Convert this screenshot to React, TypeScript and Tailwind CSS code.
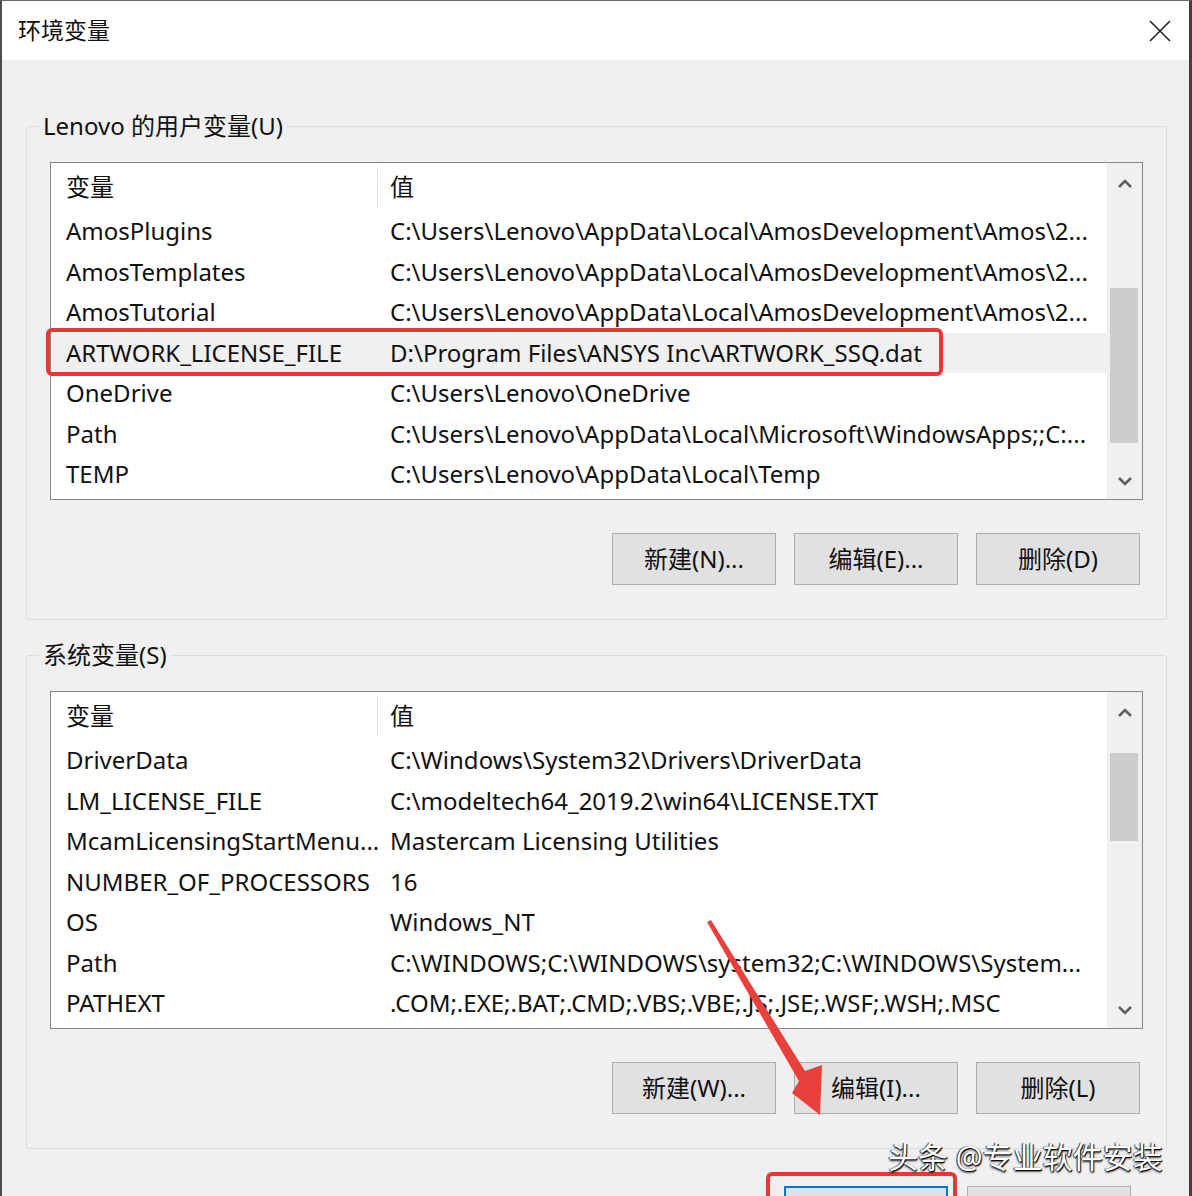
import React from "react";

type Row = { name: string; value: string; selected?: boolean };

const userRows: Row[] = [
  { name: "AmosPlugins", value: "C:\\Users\\Lenovo\\AppData\\Local\\AmosDevelopment\\Amos\\2..." },
  { name: "AmosTemplates", value: "C:\\Users\\Lenovo\\AppData\\Local\\AmosDevelopment\\Amos\\2..." },
  { name: "AmosTutorial", value: "C:\\Users\\Lenovo\\AppData\\Local\\AmosDevelopment\\Amos\\2..." },
  { name: "ARTWORK_LICENSE_FILE", value: "D:\\Program Files\\ANSYS Inc\\ARTWORK_SSQ.dat", selected: true },
  { name: "OneDrive", value: "C:\\Users\\Lenovo\\OneDrive" },
  { name: "Path", value: "C:\\Users\\Lenovo\\AppData\\Local\\Microsoft\\WindowsApps;;C:..." },
  { name: "TEMP", value: "C:\\Users\\Lenovo\\AppData\\Local\\Temp" },
];

const systemRows: Row[] = [
  { name: "DriverData", value: "C:\\Windows\\System32\\Drivers\\DriverData" },
  { name: "LM_LICENSE_FILE", value: "C:\\modeltech64_2019.2\\win64\\LICENSE.TXT" },
  { name: "McamLicensingStartMenu...", value: "Mastercam Licensing Utilities" },
  { name: "NUMBER_OF_PROCESSORS", value: "16" },
  { name: "OS", value: "Windows_NT" },
  { name: "Path", value: "C:\\WINDOWS;C:\\WINDOWS\\system32;C:\\WINDOWS\\System..." },
  { name: "PATHEXT", value: ".COM;.EXE;.BAT;.CMD;.VBS;.VBE;.JS;.JSE;.WSF;.WSH;.MSC" },
];

const Chevron = ({ down }: { down?: boolean }) => (
  <svg width="16" height="10" viewBox="0 0 16 10">
    <polyline
      points={down ? "2,2 8,8 14,2" : "2,8 8,2 14,8"}
      fill="none"
      stroke="#5f5f5f"
      strokeWidth="2.6"
    />
  </svg>
);

const VarList = ({ rows, thumbTop, thumbHeight }: { rows: Row[]; thumbTop: string; thumbHeight: string }) => (
  <div className="h-[338px] border border-[#828790] bg-white flex">
    <div className="flex-1 flex flex-col overflow-hidden">
      <div className="h-[48px] flex items-center shrink-0">
        <div className="w-[326px] pl-[15px]">变量</div>
        <div className="w-px h-[40px] bg-[#e5e5e5]" />
        <div className="pl-[12px]">值</div>
      </div>
      {rows.map((r, i) => (
        <div
          key={i}
          className={`h-[40.5px] shrink-0 flex items-center whitespace-nowrap ${r.selected ? "bg-[#f0f0f0]" : ""}`}
        >
          <div className="w-[327px] pl-[15px] overflow-hidden">{r.name}</div>
          <div className="pl-[12px] overflow-hidden">{r.value}</div>
        </div>
      ))}
    </div>
    <div className="w-[35px] bg-[#f0f0f0] flex flex-col">
      <div className="h-[42px] flex items-center justify-center">
        <Chevron />
      </div>
      <div className={`${thumbTop} ${thumbHeight} ml-[3px] mr-[4px] bg-[#cdcdcd]`} />
      <div className="mt-auto h-[36px] flex items-center justify-center">
        <Chevron down />
      </div>
    </div>
  </div>
);

const Btn = ({ label, primary }: { label?: string; primary?: boolean }) => (
  <button
    className={`w-[164px] h-[52px] bg-[#e1e1e1] flex items-center justify-center ${
      primary ? "border-2 border-[#0078d7]" : "border border-[#adadad]"
    }`}
  >
    {label}
  </button>
);

const Group = ({
  title,
  rows,
  buttons,
  thumbTop,
  thumbHeight,
  extra,
}: {
  title: string;
  rows: Row[];
  buttons: string[];
  thumbTop: string;
  thumbHeight: string;
  extra?: string;
}) => (
  <fieldset className={`border border-[#dcdcdc] rounded-[3px] ${extra ?? ""}`}>
    <legend className="ml-[12px] px-[4px] leading-[30px]">{title}</legend>
    <div className="pl-[23px] pr-[23px] pt-[21px] pb-[34px]">
      <VarList rows={rows} thumbTop={thumbTop} thumbHeight={thumbHeight} />
      <div className="mt-[33px] flex justify-end gap-[18px] pr-[3px]">
        {buttons.map((b) => (
          <Btn key={b} label={b} />
        ))}
      </div>
    </div>
  </fieldset>
);

export default function App() {
  return (
    <div className="relative w-[1192px] h-[1196px] overflow-hidden bg-[#f0f0f0] border-l-2 border-t border-r-[3px] border-l-[#4d4d4d] border-t-[#6b6b6b] border-r-[#4a3c3c] text-[24px] text-[#111] font-['Noto_Sans','Noto_Sans_CJK_SC',sans-serif]">
      <div className="h-[59px] bg-white flex items-center justify-between pl-[16px] pr-[18px]">
        <span className="text-[23px]">环境变量</span>
        <svg width="22" height="22" viewBox="0 0 22 22">
          <path d="M1 1 L21 21 M21 1 L1 21" stroke="#222" strokeWidth="1.6" />
        </svg>
      </div>

      <div className="pl-[24px] pr-[22px] pt-[51px]">
        <Group
          title="Lenovo 的用户变量(U)"
          rows={userRows}
          buttons={["新建(N)...", "编辑(E)...", "删除(D)"]}
          thumbTop="mt-[83px]"
          thumbHeight="h-[155px]"
        />
        <Group
          title="系统变量(S)"
          rows={systemRows}
          buttons={["新建(W)...", "编辑(I)...", "删除(L)"]}
          thumbTop="mt-[19px]"
          thumbHeight="h-[88px]"
          extra="mt-[20px]"
        />
        {/* OK / Cancel, only their tops are in view */}
        <div className="mt-[37px] flex justify-end gap-[19px] mr-[36px]">
          <Btn primary />
          <Btn />
        </div>
      </div>

      {/* red highlight boxes */}
      <div className="absolute left-[44px] top-[327px] w-[897px] h-[48px] border-4 border-[#e53935] rounded-[6px]" />
      <div className="absolute left-[764px] top-[1171px] w-[191px] h-[48px] border-4 border-[#e53935] rounded-[6px]" />

      {/* arrow */}
      <svg className="absolute left-0 top-0 pointer-events-none" width="1192" height="1196">
        <polygon
          points="705,921 709,919 803,1070 820,1064 818,1114 790,1092 797,1080"
          fill="#e8403a"
        />
      </svg>

      {/* watermark */}
      <div className="absolute left-[886px] top-[1133px] text-[30px] text-white [text-shadow:1px_1px_1px_#000,-1px_0_1px_#333,0_2px_2px_rgba(0,0,0,0.6)]">
        头条 @专业软件安装
      </div>
    </div>
  );
}
